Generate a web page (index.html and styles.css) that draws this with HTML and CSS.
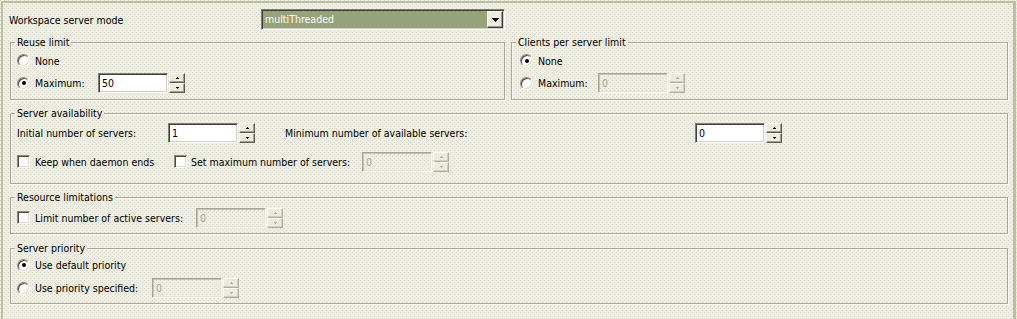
FILE: index.html
```html
<!DOCTYPE html>
<html lang="en">
<head>
    <meta charset="UTF-8">
    <title>Workspace server settings</title>
    <link rel="stylesheet" href="styles.css">
</head>
<body>
    <div class="panel">
        <div class="mode-row">
            <span class="mode-label">Workspace server mode</span>
            <div class="combo">
                <span class="combo-value">multiThreaded</span>
                <span class="combo-btn">
                    <svg width="7" height="4" viewBox="0 0 7 4"><rect x="0" y="0" width="7" height="1"/><rect x="1" y="1" width="5" height="1"/><rect x="2" y="2" width="3" height="1"/><rect x="3" y="3" width="1" height="1"/></svg>
                </span>
            </div>
        </div>

        <div class="limits">
            <fieldset class="group group-reuse">
                <legend>Reuse limit</legend>
                <div class="row row-23">
                    <label class="opt"><span class="radio"></span>None</label>
                </div>
                <div class="row row-22">
                    <label class="opt opt-reuse-max"><span class="radio checked"></span>Maximum:</label>
                    <div class="spinner">
                        <span class="spin-input">50</span>
                        <span class="spin-btns">
                            <span class="spin-btn"><svg width="3" height="2" viewBox="0 0 3 2"><rect x="1" y="0" width="1" height="1"/><rect x="0" y="1" width="3" height="1"/></svg></span>
                            <span class="spin-btn"><svg width="3" height="2" viewBox="0 0 3 2"><rect x="0" y="0" width="3" height="1"/><rect x="1" y="1" width="1" height="1"/></svg></span>
                        </span>
                    </div>
                </div>
            </fieldset>

            <fieldset class="group group-clients">
                <legend>Clients per server limit</legend>
                <div class="row row-23">
                    <label class="opt"><span class="radio checked"></span>None</label>
                </div>
                <div class="row row-22">
                    <label class="opt opt-clients-max"><span class="radio"></span>Maximum:</label>
                    <div class="spinner is-disabled">
                        <span class="spin-input">0</span>
                        <span class="spin-btns">
                            <span class="spin-btn"><svg width="3" height="2" viewBox="0 0 3 2"><rect x="1" y="0" width="1" height="1"/><rect x="0" y="1" width="3" height="1"/></svg></span>
                            <span class="spin-btn"><svg width="3" height="2" viewBox="0 0 3 2"><rect x="0" y="0" width="3" height="1"/><rect x="1" y="1" width="1" height="1"/></svg></span>
                        </span>
                    </div>
                </div>
            </fieldset>
        </div>

        <fieldset class="group group-avail">
            <legend>Server availability</legend>
            <div class="row row-26">
                <span class="field-label initial-label">Initial number of servers:</span>
                <div class="spinner">
                    <span class="spin-input">1</span>
                    <span class="spin-btns">
                        <span class="spin-btn"><svg width="3" height="2" viewBox="0 0 3 2"><rect x="1" y="0" width="1" height="1"/><rect x="0" y="1" width="3" height="1"/></svg></span>
                        <span class="spin-btn"><svg width="3" height="2" viewBox="0 0 3 2"><rect x="0" y="0" width="3" height="1"/><rect x="1" y="1" width="1" height="1"/></svg></span>
                    </span>
                </div>
                <span class="field-label min-label">Minimum number of available servers:</span>
                <div class="spinner">
                    <span class="spin-input">0</span>
                    <span class="spin-btns">
                        <span class="spin-btn"><svg width="3" height="2" viewBox="0 0 3 2"><rect x="1" y="0" width="1" height="1"/><rect x="0" y="1" width="3" height="1"/></svg></span>
                        <span class="spin-btn"><svg width="3" height="2" viewBox="0 0 3 2"><rect x="0" y="0" width="3" height="1"/><rect x="1" y="1" width="1" height="1"/></svg></span>
                    </span>
                </div>
            </div>
            <div class="row row-31">
                <label class="opt opt-keep"><span class="check"></span>Keep when daemon ends</label>
                <label class="opt opt-setmax"><span class="check"></span>Set maximum number of servers:</label>
                <div class="spinner is-disabled">
                    <span class="spin-input">0</span>
                    <span class="spin-btns">
                        <span class="spin-btn"><svg width="3" height="2" viewBox="0 0 3 2"><rect x="1" y="0" width="1" height="1"/><rect x="0" y="1" width="3" height="1"/></svg></span>
                        <span class="spin-btn"><svg width="3" height="2" viewBox="0 0 3 2"><rect x="0" y="0" width="3" height="1"/><rect x="1" y="1" width="1" height="1"/></svg></span>
                    </span>
                </div>
            </div>
        </fieldset>

        <fieldset class="group group-resource">
            <legend>Resource limitations</legend>
            <div class="row row-27">
                <label class="opt opt-limit"><span class="check"></span>Limit number of active servers:</label>
                <div class="spinner is-disabled">
                    <span class="spin-input">0</span>
                    <span class="spin-btns">
                        <span class="spin-btn"><svg width="3" height="2" viewBox="0 0 3 2"><rect x="1" y="0" width="1" height="1"/><rect x="0" y="1" width="3" height="1"/></svg></span>
                        <span class="spin-btn"><svg width="3" height="2" viewBox="0 0 3 2"><rect x="0" y="0" width="3" height="1"/><rect x="1" y="1" width="1" height="1"/></svg></span>
                    </span>
                </div>
            </div>
        </fieldset>

        <fieldset class="group group-priority">
            <legend>Server priority</legend>
            <div class="row row-20">
                <label class="opt"><span class="radio checked"></span>Use default priority</label>
            </div>
            <div class="row row-26">
                <label class="opt opt-priority"><span class="radio"></span>Use priority specified:</label>
                <div class="spinner is-disabled">
                    <span class="spin-input">0</span>
                    <span class="spin-btns">
                        <span class="spin-btn"><svg width="3" height="2" viewBox="0 0 3 2"><rect x="1" y="0" width="1" height="1"/><rect x="0" y="1" width="3" height="1"/></svg></span>
                        <span class="spin-btn"><svg width="3" height="2" viewBox="0 0 3 2"><rect x="0" y="0" width="3" height="1"/><rect x="1" y="1" width="1" height="1"/></svg></span>
                    </span>
                </div>
            </div>
        </fieldset>
    </div>
</body>
</html>
```

FILE: styles.css
```css
* {
    box-sizing: border-box;
}

body {
    margin: 0;
    background-color: #eeeee4;
    background-image:
        conic-gradient(from 270deg at 1px 1px, #d9d9c7 90deg, transparent 0),
        conic-gradient(from 270deg at 1px 1px, #d9d9c7 90deg, transparent 0);
    background-size: 4px 4px;
    background-position: 0 0, 2px 2px;
    background-attachment: fixed;
    font-family: "DejaVu Sans Condensed", "Liberation Sans", sans-serif;
    font-size: 10.5px;
    color: #000;
}

.panel {
    margin: 1px 0 0 1px;
    width: 1015px;
    height: 318px;
    border-top: 2px solid #b9c19d;
    border-left: 2px solid #b9c19d;
    border-right: 3px solid #b9c19d;
    padding: 0 5px 0 7px;
}

/* top row */
.mode-row {
    display: flex;
    align-items: center;
    height: 21px;
    margin-top: 6px;
}

.mode-label {
    width: 252px;
    margin-left: -1px;
}

.combo {
    display: flex;
    width: 244px;
    height: 21px;
    padding: 1px;
    border: 1px solid;
    border-color: #808070 #fff #fff #808070;
    box-shadow: inset 1px 1px 0 #404040, inset -1px -1px 0 #d4d0c8;
}

.combo-value {
    flex: 1;
    background: #96a279;
    color: #fff;
    padding-left: 2px;
    line-height: 17px;
}

.combo-btn {
    width: 16px;
    display: flex;
    align-items: center;
    justify-content: center;
    background: #ecebdd;
    border: 1px solid;
    border-color: #f4f4ec #404040 #404040 #f4f4ec;
    box-shadow: inset -1px -1px 0 #9a9a8a;
}

.combo-btn svg {
    fill: #000;
}

/* group boxes */
.limits {
    display: grid;
    grid-template-columns: 495px 1fr;
    column-gap: 6px;
    margin-top: 6px;
}

.group {
    margin: 0;
    min-width: 0;
    padding: 0 4px 5px 4px;
    border: 1px solid #a9a999;
    box-shadow: 1px 1px 0 #fbfbf5, inset 1px 1px 0 #fbfbf5;
}

.group legend {
    padding: 0 2px;
    line-height: 13px;
    background-color: #eeeee4;
    background-image:
        conic-gradient(from 270deg at 1px 1px, #d9d9c7 90deg, transparent 0),
        conic-gradient(from 270deg at 1px 1px, #d9d9c7 90deg, transparent 0);
    background-size: 4px 4px;
    background-position: 0 0, 2px 2px;
    background-attachment: fixed;
}

.group-avail {
    margin-top: 7px;
    padding-bottom: 6px;
}

.group-resource {
    margin-top: 7px;
    padding-bottom: 2px;
}

.group-priority {
    margin-top: 8px;
    padding-bottom: 2px;
}

.row {
    display: flex;
    align-items: center;
    padding-left: 2px;
}

.group-clients .row {
    padding-left: 4px;
}

.row-20 { height: 20px; }
.row-22 { height: 22px; }
.row-23 { height: 23px; }
.row-26 { height: 26px; }
.row-27 { height: 27px; }
.row-31 { height: 31px; }

.field-label {
    flex: none;
}

.initial-label { width: 151px; }

.min-label {
    width: 410px;
    margin-left: 30px;
}

/* radio / check */
.opt {
    display: flex;
    align-items: center;
    gap: 5px;
    flex: none;
}

.opt-reuse-max { width: 81px; }
.opt-clients-max { width: 78px; }
.opt-keep { width: 157px; }
.opt-setmax { width: 188px; gap: 4px; }
.opt-limit { width: 179px; }
.opt-priority { width: 135px; }

.radio,
.check {
    width: 13px;
    height: 13px;
    flex: none;
    display: flex;
    align-items: center;
    justify-content: center;
    background: #fff;
    border: 1px solid;
    border-color: #8c8c7c #fdfdf8 #fdfdf8 #8c8c7c;
    box-shadow: inset 1px 1px 0 #4a4a40, inset -1px -1px 0 #dcdccc;
}

.radio {
    border-radius: 50%;
}

.radio.checked::after {
    content: "";
    width: 4px;
    height: 4px;
    border-radius: 50%;
    background: #000;
}

/* spinner */
.spinner {
    display: flex;
    gap: 1px;
    height: 20px;
    flex: none;
}

.spin-input {
    width: 70px;
    height: 20px;
    background: #fff;
    border: 1px solid;
    border-color: #808070 #fdfdf8 #fdfdf8 #808070;
    box-shadow: inset 1px 1px 0 #404040, inset -1px -1px 0 #d4d0c8;
    padding-left: 3px;
    line-height: 18px;
}

.spin-btns {
    display: flex;
    flex-direction: column;
    width: 16px;
}

.spin-btn {
    height: 10px;
    display: flex;
    align-items: center;
    justify-content: center;
    background: #ecebdd;
    border: 1px solid;
    border-color: #fdfdf8 #5a5a50 #5a5a50 #fdfdf8;
    box-shadow: inset -1px -1px 0 #a0a090;
}

.spin-btn svg {
    fill: #000;
}

.is-disabled .spin-input {
    background: transparent;
    color: #a6a696;
    border-color: #a6a696 #fdfdf8 #fdfdf8 #a6a696;
    box-shadow: inset 1px 1px 0 #c4c4b4, inset -1px -1px 0 #e4e4d6;
}

.is-disabled .spin-btn {
    border-color: #fdfdf8 #b0b0a0 #b0b0a0 #fdfdf8;
    box-shadow: inset -1px -1px 0 #d0d0c0;
}

.is-disabled .spin-btn svg {
    fill: #b0b0a0;
}
```
